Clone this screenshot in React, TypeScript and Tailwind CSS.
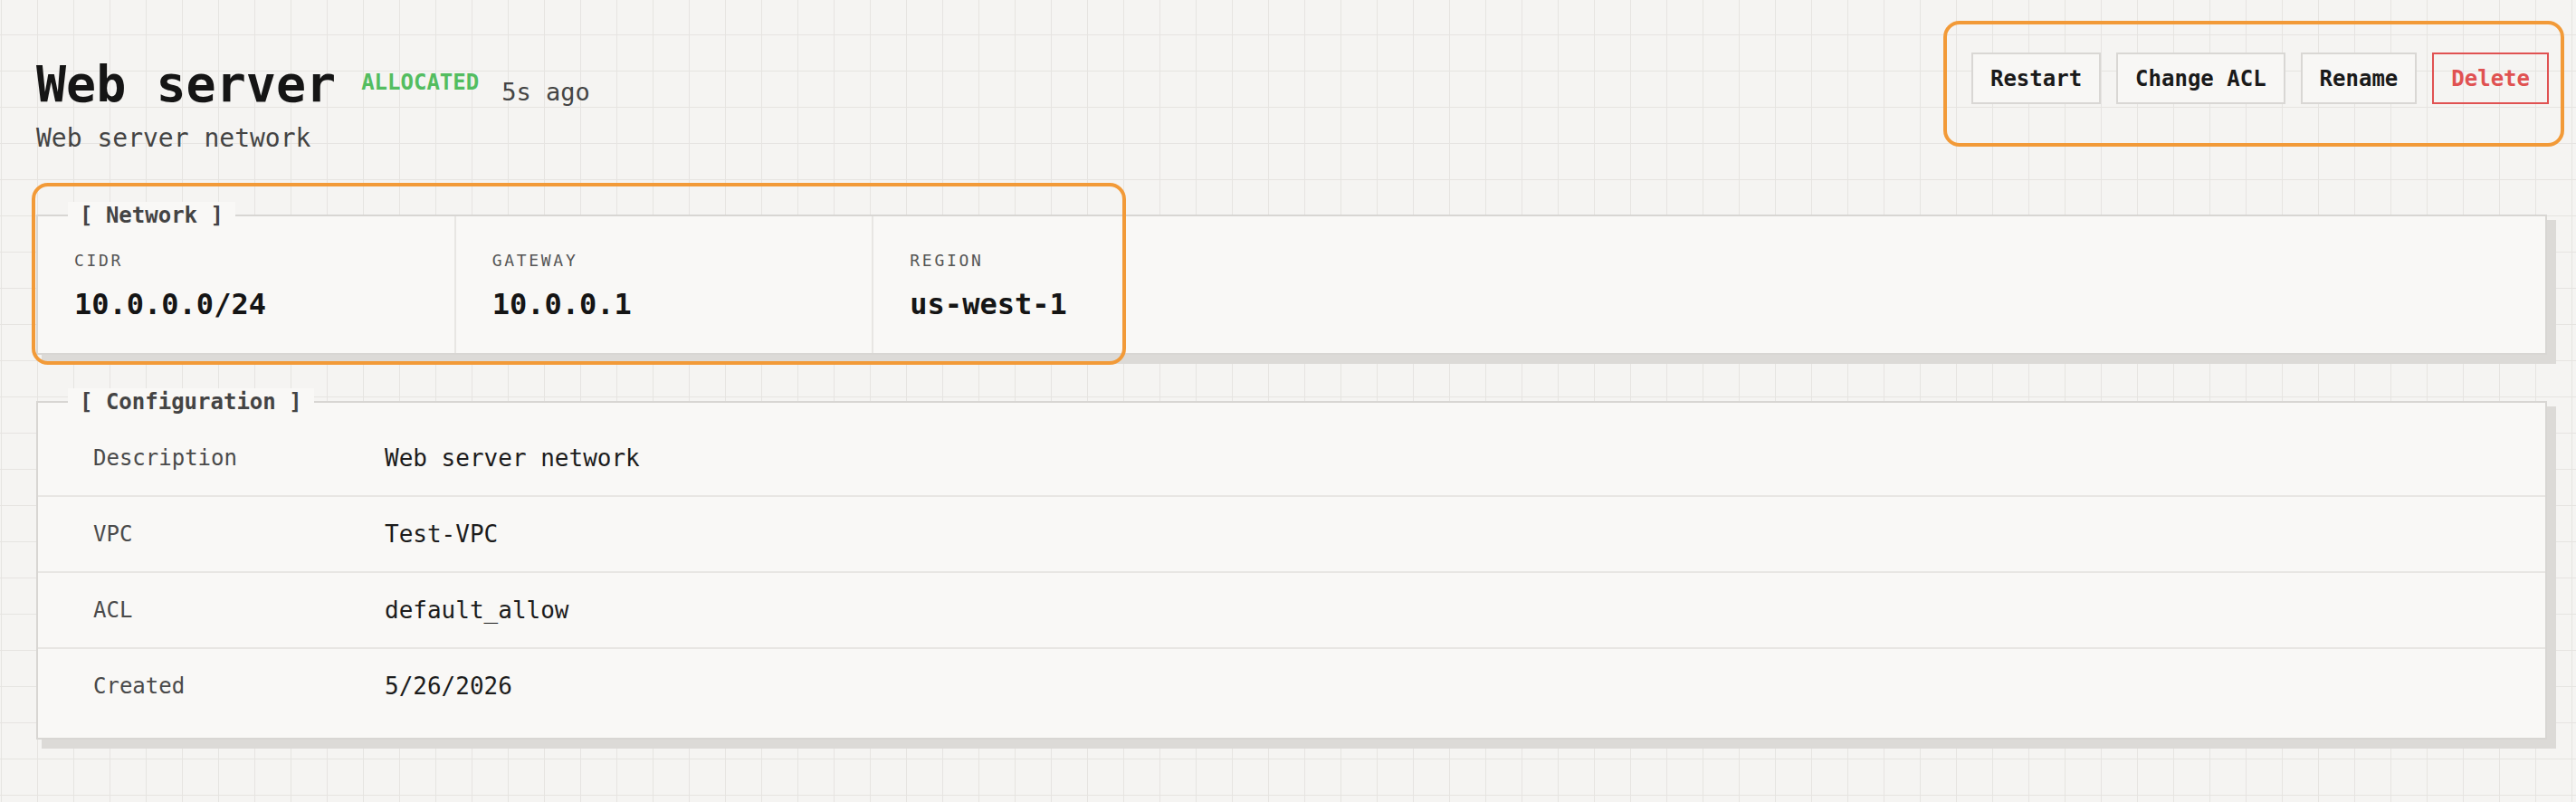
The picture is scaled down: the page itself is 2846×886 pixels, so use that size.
import React from 'react';

const actions = ['Restart', 'Change ACL', 'Rename'];

const network = [
  { label: 'CIDR', value: '10.0.0.0/24' },
  { label: 'Gateway', value: '10.0.0.1' },
  { label: 'Region', value: 'us-west-1' },
];

const config = [
  { label: 'Description', value: 'Web server network' },
  { label: 'VPC', value: 'Test-VPC' },
  { label: 'ACL', value: 'default_allow' },
  { label: 'Created', value: '5/26/2026' },
];

function Section({
  title,
  className = '',
  children,
}: {
  title: string;
  className?: string;
  children: React.ReactNode;
}) {
  return (
    <section
      className={`relative border-2 border-[#d8d6d3] bg-[#f9f8f6] shadow-[8px_8px_0_2px_#dcdad7] ${className}`}
    >
      <span className="absolute left-[33px] top-[-1px] -translate-y-1/2 bg-[#f9f8f6] px-[13px] text-[24px] leading-[30px] font-bold text-[#444]">
        [ {title} ]
      </span>
      {children}
    </section>
  );
}

function App() {
  return (
    <div
      className="min-h-screen bg-[#f5f4f2] pl-10 pr-8 pt-[58px] pb-12 text-[#151515] font-['DejaVu_Sans_Mono','Liberation_Mono',monospace] [background-image:linear-gradient(to_bottom,#e6e4e1_1.5px,transparent_1.5px),linear-gradient(to_right,#e6e4e1_1.5px,transparent_1.5px)] [background-size:40px_40px] [background-position:0_38px,1px_0]"
    >
      {/* header */}
      <header className="flex items-start justify-between">
        <div className="pt-[8px]">
          <div className="flex items-start">
            <h1 className="text-[55px] leading-none font-bold text-[#151515]">Web server</h1>
            <span className="ml-[28px] mt-[13px] text-[24px] leading-none font-bold text-[#53bd60]">
              ALLOCATED
            </span>
            <span className="ml-[25px] mt-[22px] text-[27px] leading-none text-[#444]">5s ago</span>
          </div>
          <p className="mt-[18px] text-[28px] leading-none text-[#444]">Web server network</p>
        </div>

        <div className="relative -mr-[2px] flex gap-[17px]">
          <div className="pointer-events-none absolute -left-[31px] -top-[35px] -right-[17px] -bottom-[47px] z-10 rounded-[18px] border-4 border-[#f29a38]" />
          {actions.map((a) => (
            <button
              key={a}
              className="border-2 border-[#d9d7d4] bg-[#f8f7f5] px-[19px] py-[14.5px] text-[24px] leading-none font-bold text-[#1a1a1a]"
            >
              {a}
            </button>
          ))}
          <button className="border-2 border-[#e05252] bg-transparent px-[19px] py-[14.5px] text-[24px] leading-none font-bold text-[#e05252]">
            Delete
          </button>
        </div>
      </header>

      {/* network */}
      <Section title="Network" className="mt-[70px]">
        <div className="pointer-events-none absolute -left-[7px] -top-[37px] z-10 h-[201px] w-[1209px] rounded-[18px] border-4 border-[#f29a38]" />
        <div className="grid grid-cols-6 divide-x-2 divide-[#e8e6e3]">
          {network.map((n) => (
            <div key={n.label} className="pl-10 pt-10 pb-[38px]">
              <div className="text-[18px] leading-none uppercase tracking-[0.15em] text-[#555]">{n.label}</div>
              <div className="mt-[23px] text-[32px] leading-none font-bold text-[#151515]">{n.value}</div>
            </div>
          ))}
        </div>
      </Section>

      {/* configuration */}
      <Section title="Configuration" className="mt-[51px] pt-5 pb-4">
        {config.map((c) => (
          <div
            key={c.label}
            className="flex h-[84px] items-center border-b-2 border-[#e8e6e3] pl-[61px] last:h-[82px] last:border-b-0"
          >
            <div className="w-[322px] text-[24px] leading-none text-[#4a4a4a]">{c.label}</div>
            <div className="text-[26px] leading-none text-[#1c1c1c]">{c.value}</div>
          </div>
        ))}
      </Section>
    </div>
  );
}

export default App;
